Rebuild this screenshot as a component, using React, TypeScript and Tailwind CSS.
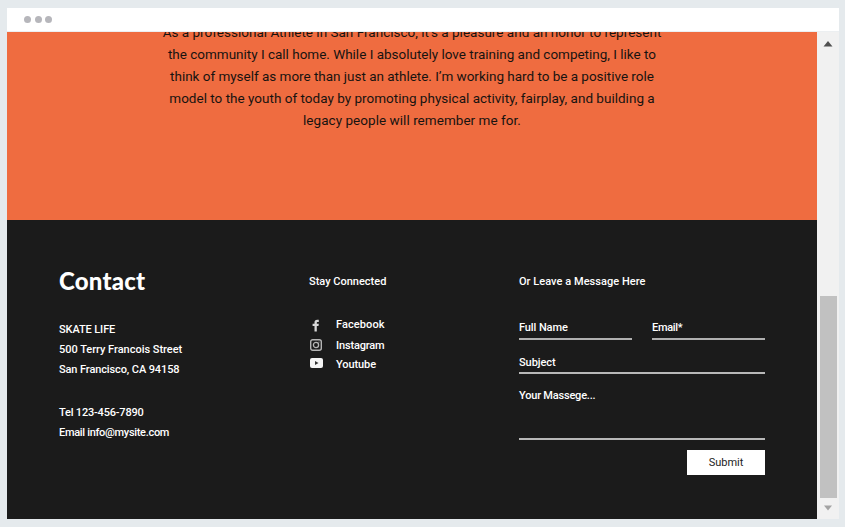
import type { ReactNode } from "react";

const body = [
  { text: "As a professional Athlete in San Francisco, it’s a pleasure and an honor to represent", track: "tracking-[0.01px]" },
  { text: "the community I call home. While I absolutely love training and competing, I like to", track: "tracking-[-0.01px]" },
  { text: "think of myself as more than just an athlete. I’m working hard to be a positive role", track: "tracking-[-0.02px]" },
  { text: "model to the youth of today by promoting physical activity, fairplay, and building a", track: "tracking-[0.01px]" },
  { text: "legacy people will remember me for.", track: "tracking-[0.04px]" },
];

function Field({ label, className }: { label: string; className: string }) {
  return <label className={`block border-b-2 pt-px leading-4 ${className}`}>{label}</label>;
}

function Social({ icon, label, className }: { icon: ReactNode; label: string; className: string }) {
  return (
    <li className={`flex ${className}`}>
      <span className="w-[27px]">{icon}</span>
      <span className="pt-px leading-4">{label}</span>
    </li>
  );
}

export default function App() {
  return (
    <div className="h-[527px] w-[845px] overflow-hidden bg-[#e5eaed] pl-[7px] pt-2 font-['Roboto',sans-serif]">
      <div className="flex h-6 w-[832px] items-center gap-[3.5px] border-b border-[#eceff1] bg-white pl-[17px]">
        <i className="size-[7px] rounded-full bg-[#b6b6bb]" />
        <i className="size-[7px] rounded-full bg-[#b6b6bb]" />
        <i className="size-[7px] rounded-full bg-[#b6b6bb]" />
      </div>
      <div className="flex h-[487px] w-[832px]">
        <main className="w-[810px]">
          <section className="flex h-[188px] flex-col items-center overflow-hidden bg-[#ef6c40] text-[13.5px] leading-[22px] text-[#171310]">
            <div className="-mt-[11px] text-center">
              {body.map((l) => (
                <p key={l.text} className={`whitespace-nowrap ${l.track}`}>{l.text}</p>
              ))}
            </div>
          </section>
          <footer className="flex h-[299px] bg-[#1b1b1b] pl-[52px] text-[11px] font-medium whitespace-nowrap text-white">
            <div className="w-[250px] pt-[44px]">
              <h2 className="font-['Lato',sans-serif] text-[24px] leading-[34px] font-black tracking-[0.2px]">Contact</h2>
              <div className="mt-[22px] leading-5">
                <p className="tracking-[-0.1px]">SKATE LIFE</p>
                <p className="tracking-[-0.02px]">500 Terry Francois Street</p>
                <p className="tracking-[-0.11px]">San Francisco, CA 94158</p>
                <p className="mt-[23px] tracking-[-0.19px]">Tel 123-456-7890</p>
                <p className="tracking-[-0.31px]">Email info@mysite.com</p>
              </div>
            </div>
            <div className="w-[210px] pt-[54px]">
              <h3 className="leading-4">Stay Connected</h3>
              <ul className="mt-[26px]">
                <Social
                  className="h-[21px] tracking-[0.1px]"
                  label="Facebook"
                  icon={
                    <svg className="mt-[3px] ml-[2px]" width="10" height="13" viewBox="0 0 10 13">
                      <path d="M3.5 12.5V7H1.6V4.8h1.9V3.5C3.5 1.6 4.5.8 6.1.8h1.7v2.1H6.7c-.7 0-.9.3-.9.9v1h2L7.5 7H5.8v5.5z" fill="#d8d8d8" />
                    </svg>
                  }
                />
                <Social
                  className="h-[19px] tracking-[-0.17px]"
                  label="Instagram"
                  icon={
                    <svg className="mt-[2px] ml-px" width="12" height="12" viewBox="0 0 12 12" fill="none" stroke="#b5b5b5">
                      <rect x=".7" y=".7" width="10.6" height="10.6" rx="2" strokeWidth="1.4" />
                      <circle cx="6" cy="6" r="2.6" strokeWidth="1.3" />
                      <circle cx="9" cy="3" r=".5" fill="#bdbdbd" stroke="none" />
                    </svg>
                  }
                />
                <Social
                  className="h-[20px] tracking-[-0.08px]"
                  label="Youtube"
                  icon={
                    <svg className="mt-[2px] ml-px" width="13" height="10" viewBox="0 0 13 10">
                      <rect width="13" height="10" rx="2" fill="#f4f4f4" />
                      <path d="M5 3v4L8.5 5z" fill="#333" />
                    </svg>
                  }
                />
              </ul>
            </div>
            <form className="w-[246px] pt-[54px]">
              <h3 className="leading-4 tracking-[0.04px]">Or Leave a Message Here</h3>
              <div className="mt-[29px] flex justify-between">
                <Field label="Full Name" className="h-[21px] w-[113px] border-[#b0b0b0] tracking-[-0.1px]" />
                <Field label="Email*" className="h-[21px] w-[113px] border-[#b0b0b0] tracking-[-0.3px]" />
              </div>
              <Field label="Subject" className="mt-[14px] h-5 border-[#b8b8b8] tracking-[-0.05px]" />
              <Field label="Your Massege..." className="mt-[13px] h-[53px] border-[#b8b8b8] tracking-[-0.2px]" />
              <button type="button" className="mt-[10px] ml-auto block h-[25px] w-[78px] bg-white pt-0.5 text-[11px] font-normal text-[#222]">Submit</button>
            </form>
          </footer>
        </main>
        <aside className="flex w-[22px] flex-col items-center bg-[#f1f1f1]">
          <svg className="mt-[9px]" width="10" height="6" viewBox="0 0 10 6"><path d="M5 0l4.5 5.5h-9z" fill="#505050" /></svg>
          <div className="mt-[249px] h-[202px] w-[17px] bg-[#c1c1c1]" />
          <svg className="mt-[7px]" width="8" height="6" viewBox="0 0 8 6"><path d="M0 .5h8L4 5.5z" fill="#a3a3a3" /></svg>
        </aside>
      </div>
    </div>
  );
}
